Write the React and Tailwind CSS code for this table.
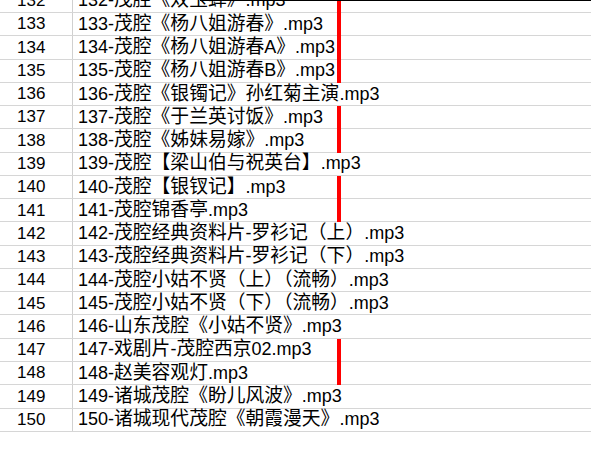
import React from "react";

const rows = [
  [132, "132-茂腔《双玉蝉》.mp3", true],
  [133, "133-茂腔《杨八姐游春》.mp3", true],
  [134, "134-茂腔《杨八姐游春A》.mp3", true],
  [135, "135-茂腔《杨八姐游春B》.mp3", true],
  [136, "136-茂腔《银镯记》孙红菊主演.mp3", false],
  [137, "137-茂腔《于兰英讨饭》.mp3", true],
  [138, "138-茂腔《姊妹易嫁》.mp3", true],
  [139, "139-茂腔【梁山伯与祝英台】.mp3", false],
  [140, "140-茂腔【银钗记】.mp3", true],
  [141, "141-茂腔锦香亭.mp3", true],
  [142, "142-茂腔经典资料片-罗衫记（上）.mp3", false],
  [143, "143-茂腔经典资料片-罗衫记（下）.mp3", false],
  [144, "144-茂腔小姑不贤（上）（流畅）.mp3", false],
  [145, "145-茂腔小姑不贤（下）（流畅）.mp3", false],
  [146, "146-山东茂腔《小姑不贤》.mp3", false],
  [147, "147-戏剧片-茂腔西京02.mp3", true],
  [148, "148-赵美容观灯.mp3", true],
  [149, "149-诸城茂腔《盼儿风波》.mp3", false],
  [150, "150-诸城现代茂腔《朝霞漫天》.mp3", false],
];

// split a name into CJK / latin runs, CJK glyphs are set a bit wider
const runs = (s) => s.split(/([\u3000-\u303f\u3400-\u9fff\uff00-\uffef]+)/).filter(Boolean);
const isCjk = (s) => /[\u3000-\u303f\u3400-\u9fff\uff00-\uffef]/.test(s);

const Row = ({ num, name, marked }) => (
  <div className="relative flex h-[23.28px] items-center border-b border-[#d6d6d6]">
    <div className="flex h-full w-[73px] shrink-0 items-center border-r border-[#d0d0d0] pl-[17px] text-[17px]">
      {num}
    </div>
    <div className="whitespace-nowrap pl-[5px] text-[18px] leading-none">
      {runs(name).map((r, i) =>
        isCjk(r) ? (
          <span key={i} className="text-[18.8px]">{r}</span>
        ) : (
          <span key={i}>{r}</span>
        )
      )}
    </div>
    {marked && (
      <div className="absolute left-[337px] top-0 bottom-[-1px] w-[4px] bg-[#ff0000]" />
    )}
  </div>
);

export default function App() {
  return (
    <div
      className="relative h-[450px] w-[591px] overflow-hidden bg-white text-black"
      style={{ fontFamily: '"Liberation Sans", "Noto Sans CJK SC", sans-serif' }}
    >
      <div className="-mt-[10.28px] flex flex-col">
        {rows.map(([num, name, marked]) => (
          <Row key={num} num={num} name={name} marked={marked} />
        ))}
      </div>
      <div className="absolute left-[200px] right-0 top-0 h-px bg-black" />
    </div>
  );
}
